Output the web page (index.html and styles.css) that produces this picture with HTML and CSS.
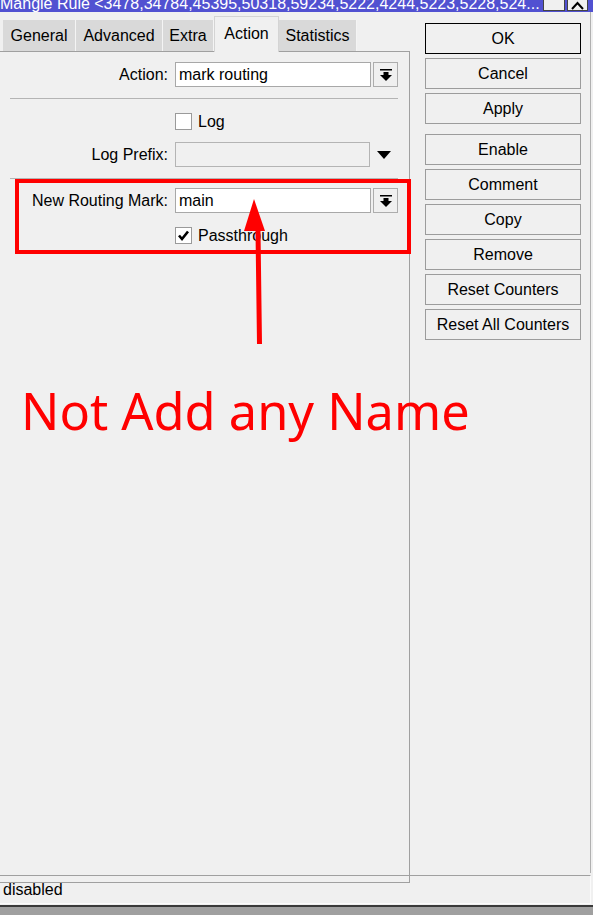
FILE: index.html
```html
<!DOCTYPE html>
<html lang="en">
<head>
    <meta charset="UTF-8">
    <title>Mangle Rule</title>
    <link rel="stylesheet" href="styles.css">
</head>
<body>
    <div class="window">
        <div class="titlebar">
            <span class="title">Mangle Rule &lt;3478,34784,45395,50318,59234,5222,4244,5223,5228,524...</span>
            <span class="tbtn"></span>
            <span class="tbtn close">
                <svg width="19" height="10" viewBox="0 0 19 10"><polyline points="4,9 9.5,3 15,9" fill="none" stroke="#000" stroke-width="2"/></svg>
            </span>
        </div>

        <div class="body">
            <div class="main">
                <div class="tabs">
                    <div class="tab tab-general">General</div>
                    <div class="tab tab-advanced">Advanced</div>
                    <div class="tab tab-extra">Extra</div>
                    <div class="tab tab-action active">Action</div>
                    <div class="tab tab-stats">Statistics</div>
                </div>

                <div class="panel">
                    <div class="row">
                        <div class="label">Action:</div>
                        <div class="field">mark routing</div>
                        <div class="drop">
                            <svg width="12" height="12" viewBox="0 0 12 12"><rect x="0" y="0" width="12" height="1.5"/><rect x="3.5" y="3" width="5" height="3"/><polygon points="0,6 12,6 6,12"/></svg>
                        </div>
                    </div>

                    <div class="sep"></div>

                    <div class="row log-row">
                        <div class="label"></div>
                        <span class="check"></span>
                        <span class="check-text">Log</span>
                    </div>
                    <div class="row prefix-row">
                        <div class="label">Log Prefix:</div>
                        <div class="field disabled"></div>
                        <svg class="caret" width="14" height="8" viewBox="0 0 14 8"><polygon points="0,0 14,0 7,8"/></svg>
                    </div>

                    <div class="sep"></div>

                    <div class="row mark-row">
                        <div class="label">New Routing Mark:</div>
                        <div class="field">main</div>
                        <div class="drop">
                            <svg width="12" height="12" viewBox="0 0 12 12"><rect x="0" y="0" width="12" height="1.5"/><rect x="3.5" y="3" width="5" height="3"/><polygon points="0,6 12,6 6,12"/></svg>
                        </div>
                    </div>
                    <div class="row pass-row">
                        <div class="label"></div>
                        <span class="check">
                            <svg width="15" height="15" viewBox="0 0 15 15"><polyline points="3,7.5 6,11 12,3.5" fill="none" stroke="#000" stroke-width="2.6"/></svg>
                        </span>
                        <span class="check-text">Passthrough</span>
                    </div>
                </div>
            </div>

            <div class="side">
                <div class="btn default">OK</div>
                <div class="btn">Cancel</div>
                <div class="btn">Apply</div>
                <div class="btn spaced">Enable</div>
                <div class="btn">Comment</div>
                <div class="btn">Copy</div>
                <div class="btn">Remove</div>
                <div class="btn">Reset Counters</div>
                <div class="btn">Reset All Counters</div>
            </div>
        </div>

        <div class="status">disabled</div>
        <div class="edge"></div>
    </div>

    <!-- red markup drawn over the dialog -->
    <div class="mark-box"></div>
    <svg class="arrow" width="593" height="915" viewBox="0 0 593 915">
        <polygon points="254,199 265,231 260.5,231 262,344 257,344 255.5,231 244,231" fill="#ff0000"/>
    </svg>
    <div class="note">Not Add any Name</div>
</body>
</html>
```

FILE: styles.css
```css
body {
    margin: 0;
    background-color: #f0f0f0;
    font-family: "Liberation Sans", Arial, sans-serif;
    font-size: 16px;
    color: #000;
}
.window {
    width: 593px;
    height: 915px;
    overflow: hidden;
}
.titlebar {
    display: flex;
    height: 12px;
    overflow: hidden;
    background-color: #5151d1;
    padding-right: 5px;
}
.title {
    flex: 1;
    color: #fff;
    font-size: 16px;
    line-height: 16px;
    margin-top: -4px;
    white-space: nowrap;
    overflow: hidden;
}
.tbtn {
    width: 22px;
    height: 11px;
    margin-left: 2px;
    background-color: #f0f0f0;
    border: 1px solid #444;
    border-top: none;
    box-sizing: border-box;
    display: flex;
    align-items: flex-end;
    justify-content: center;
}
.tbtn.close {
    width: 21px;
}
.body {
    display: flex;
    height: 861px;
    border-right: 1px solid #b0b0b0;
    width: 590px;
}
.main {
    width: 410px;
    margin-top: 4px;
}
.tabs {
    display: flex;
    height: 35px;
    padding-left: 3px;
    align-items: flex-end;
}
.tab {
    height: 31px;
    line-height: 31px;
    box-sizing: border-box;
    text-align: center;
    background-color: #d9d9d9;
    border-right: 1px solid #f4f4f4;
    white-space: nowrap;
}
.tab-general { width: 73px; }
.tab-advanced { width: 87px; }
.tab-extra { width: 51px; }
.tab-action { width: 65px; }
.tab-stats { width: 78px; }
.tab.active {
    line-height: 33px;
    background-color: #f0f0f0;
    border: 1px solid #d4d4d4;
    border-bottom: none;
    height: 36px;
    margin-bottom: -1px;
    position: relative;
}
.panel {
    height: 820px;
    border-top: 1px solid #a0a0a0;
    border-right: 1px solid #a0a0a0;
    border-bottom: 1px solid #a0a0a0;
    padding-top: 10px;
    box-sizing: content-box;
}
.row {
    display: flex;
    align-items: center;
    height: 25px;
}
.label {
    width: 175px;
    padding-right: 7px;
    box-sizing: border-box;
    text-align: right;
    white-space: nowrap;
}
.field {
    width: 196px;
    height: 25px;
    box-sizing: border-box;
    border: 1px solid #a8a8a8;
    background-color: #fff;
    padding: 0 3px;
    line-height: 23px;
}
.field.disabled {
    width: 195px;
    background-color: #f0f0f0;
    border-color: #b4b4b4;
}
.drop {
    margin-left: 2px;
    width: 25px;
    height: 25px;
    box-sizing: border-box;
    border: 1px solid #adadad;
    background-color: #f0f0f0;
    display: flex;
    align-items: center;
    justify-content: center;
}
.caret {
    margin-left: 7px;
}
.sep {
    margin: 11px 11px 0 10px;
    border-top: 1px solid #b4b4b4;
}
.log-row {
    margin-top: 10px;
}
.prefix-row {
    margin-top: 8px;
}
.mark-row {
    margin-top: 9px;
}
.pass-row {
    margin-top: 10px;
}
.check {
    width: 17px;
    height: 17px;
    box-sizing: border-box;
    border: 1px solid #9a9a9a;
    background-color: #fff;
    display: flex;
    align-items: center;
    justify-content: center;
}
.check-text {
    margin-left: 6px;
}
.side {
    padding: 11px 0 0 15px;
}
.btn {
    width: 156px;
    height: 31px;
    box-sizing: border-box;
    border: 1px solid #9c9c9c;
    background-color: #f0f0f0;
    text-align: center;
    line-height: 29px;
    margin-bottom: 4px;
}
.btn.default {
    border-color: #000;
}
.btn.spaced {
    margin-top: 10px;
}
.status {
    height: 27px;
    margin-top: 2px;
    width: 587px;
    border-top: 1px solid #a0a0a0;
    border-bottom: 1px solid #fbfbfb;
    border-right: 1px solid #fbfbfb;
    padding-left: 3px;
    line-height: 27px;
}
.edge {
    border-top: 2px solid #3a3a3a;
    height: 20px;
    background-color: #a0a0a0;
    margin-top: 1px;
}
.mark-box {
    position: absolute;
    left: 15px;
    top: 179px;
    width: 388px;
    height: 67px;
    border: 4px solid #ff0000;
}
.arrow {
    position: absolute;
    left: 0;
    top: 0;
    pointer-events: none;
}
.note {
    position: absolute;
    left: 21px;
    top: 385px;
    font-family: "Noto Sans", "Open Sans", sans-serif;
    font-size: 50.5px;
    line-height: 51px;
    color: #ff0000;
    white-space: nowrap;
}
```
